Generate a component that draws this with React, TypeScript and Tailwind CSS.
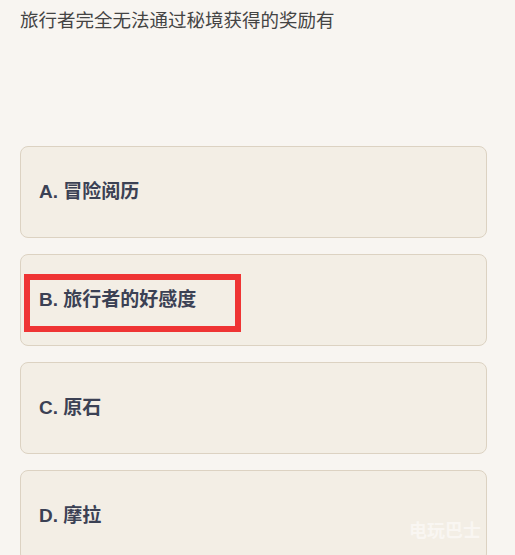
import React from 'react';

const options = ['A. 冒险阅历', 'B. 旅行者的好感度', 'C. 原石', 'D. 摩拉'];

const App: React.FC = () => {
    return (
        <div
            className="w-[515px] h-[555px] overflow-hidden bg-[#f8f5f1] relative"
            style={{ fontFamily: '"Liberation Sans", "Noto Sans CJK SC", sans-serif' }}
        >
            <div className="px-5 pt-[7px] text-[18.5px] leading-[28px] text-[#444444]">
                旅行者完全无法通过秘境获得的奖励有
            </div>

            <div className="mt-[111px] flex flex-col gap-4 pl-5 w-[487px]">
                {options.map((opt, i) => (
                    <div
                        key={opt}
                        className="relative h-[92px] shrink-0 flex items-center pl-[18px] rounded-lg border-[1.5px] border-[#dcd2c2] bg-[#f3eee5]"
                    >
                        <span className="text-[19px] font-bold text-[#3b4154]">{opt}</span>
                        {i === 1 && (
                            <div className="absolute left-[3px] top-[19px] w-[217px] h-[58px] border-[6px] border-[#ef3434]" />
                        )}
                    </div>
                ))}
            </div>

            {/* watermark */}
            <div className="absolute right-[34px] bottom-[10px] text-[18px] font-bold text-white/50 select-none">
                电玩巴士
            </div>
        </div>
    );
};

export default App;
